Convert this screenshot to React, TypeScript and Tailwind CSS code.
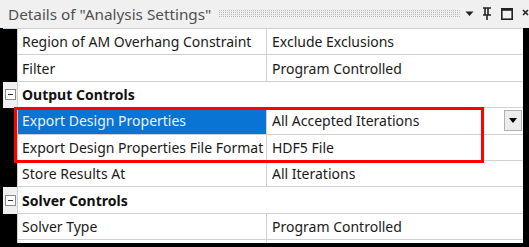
import React from "react";

const FONT = { fontFamily: '"Noto Sans", "Open Sans", "Liberation Sans", sans-serif' };

type Row =
  | { kind: "prop"; label: string; value: string; selected?: boolean; dropdown?: boolean }
  | { kind: "cat"; label: string };

const rows: Row[] = [
  { kind: "prop", label: "Region of AM Overhang Constraint", value: "Exclude Exclusions" },
  { kind: "prop", label: "Filter", value: "Program Controlled" },
  { kind: "cat", label: "Output Controls" },
  { kind: "prop", label: "Export Design Properties", value: "All Accepted Iterations", selected: true, dropdown: true },
  { kind: "prop", label: "Export Design Properties File Format", value: "HDF5 File" },
  { kind: "prop", label: "Store Results At", value: "All Iterations" },
  { kind: "cat", label: "Solver Controls" },
  { kind: "prop", label: "Solver Type", value: "Program Controlled" },
  { kind: "prop", label: "", value: "" },
];

function Grip() {
  return (
    <svg className="flex-1 h-[8px] ml-[8px] mr-[5px]" preserveAspectRatio="none">
      <defs>
        <pattern id="dots" width="2" height="2" patternUnits="userSpaceOnUse">
          <rect x="0" y="0" width="1" height="1" fill="#b8b8b8" />
        </pattern>
      </defs>
      <rect width="100%" height="100%" fill="url(#dots)" />
    </svg>
  );
}

function PropRow({ r }: { r: Extract<Row, { kind: "prop" }> }) {
  return (
    <div className="flex h-[26.4px] shrink-0">
      <div className="w-[14px] bg-black shrink-0" />
      <div
        className={`w-[249px] shrink-0 border-l border-b border-[#d0d0d0] flex items-center pl-[4px] text-[14px] whitespace-nowrap ${
          r.selected ? "bg-[#0a74d4] text-[#e8f2fc]" : "bg-white text-[#1a1a1a]"
        }`}
      >
        {r.label}
      </div>
      <div className="flex-1 bg-white border-l border-b border-[#d0d0d0] flex items-center pl-[5px] text-[14px] text-[#1a1a1a] relative">
        {r.value}
        {r.dropdown && (
          <div className="absolute right-[1px] top-[2px] w-[18px] h-[21px] bg-[#ececec] border border-[#b0b0b0] flex items-center justify-center">
            <svg width="8" height="5" viewBox="0 0 8 5">
              <path d="M0 0H8L4 5Z" fill="#000" />
            </svg>
          </div>
        )}
      </div>
    </div>
  );
}

function CatRow({ label }: { label: string }) {
  return (
    <div className="flex h-[26.4px] shrink-0">
      <div className="w-[14px] bg-[#f0f0f0] shrink-0 flex items-center justify-center">
        <div className="w-[11px] h-[11px] border border-[#8a8a8a] bg-white flex items-center justify-center">
          <div className="w-[5px] h-[1px] bg-[#333]" />
        </div>
      </div>
      <div className="flex-1 bg-white border-l border-b border-[#d0d0d0] flex items-center pl-[4px] text-[14px] font-bold text-[#111]">
        {label}
      </div>
    </div>
  );
}

export default function App() {
  return (
    <div className="w-[529px] h-[247px] bg-black overflow-hidden flex flex-col" style={FONT}>
      <div className="h-[28px] bg-[#f0f0f0] flex items-center pl-[8px] shrink-0">
        <span className="text-[15.3px] text-[#505050] whitespace-nowrap">Details of "Analysis Settings"</span>
        <Grip />
        <svg width="9" height="6" viewBox="0 0 9 6" className="mr-[8px] shrink-0">
          <path d="M0.5 0.5H8.5L4.5 5Z" fill="#222" />
        </svg>
        <svg width="10" height="14" viewBox="0 0 10 14" className="mr-[9px] shrink-0">
          <path d="M1 1H9M3 1V8M6 1V8M1 8H9M5 8V13" stroke="#222" strokeWidth="1.6" fill="none" />
        </svg>
        <svg width="12" height="12" viewBox="0 0 12 12" className="mr-[9px] shrink-0">
          <rect x="0.8" y="0.8" width="10.4" height="10.4" stroke="#222" strokeWidth="1.6" fill="none" />
          <path d="M1 1.8H11" stroke="#222" strokeWidth="2" />
        </svg>
        <svg width="7" height="12" viewBox="0 0 7 12" className="shrink-0">
          <path d="M1 2L6 7M6 2L1 7" stroke="#222" strokeWidth="1.6" />
        </svg>
      </div>
      <div className="flex-1 flex pl-[3px] pr-[6px] pb-[4px] overflow-hidden">
        <div className="flex-1 flex flex-col overflow-hidden border-t border-[#d0d0d0] relative">
          {rows.map((r, i) =>
            r.kind === "cat" ? <CatRow key={i} label={r.label} /> : <PropRow key={i} r={r} />
          )}
          <div className="absolute left-[11px] top-[78px] w-[470px] h-[56px] border-[3px] border-[#ff0000] pointer-events-none" />
        </div>
      </div>
    </div>
  );
}
